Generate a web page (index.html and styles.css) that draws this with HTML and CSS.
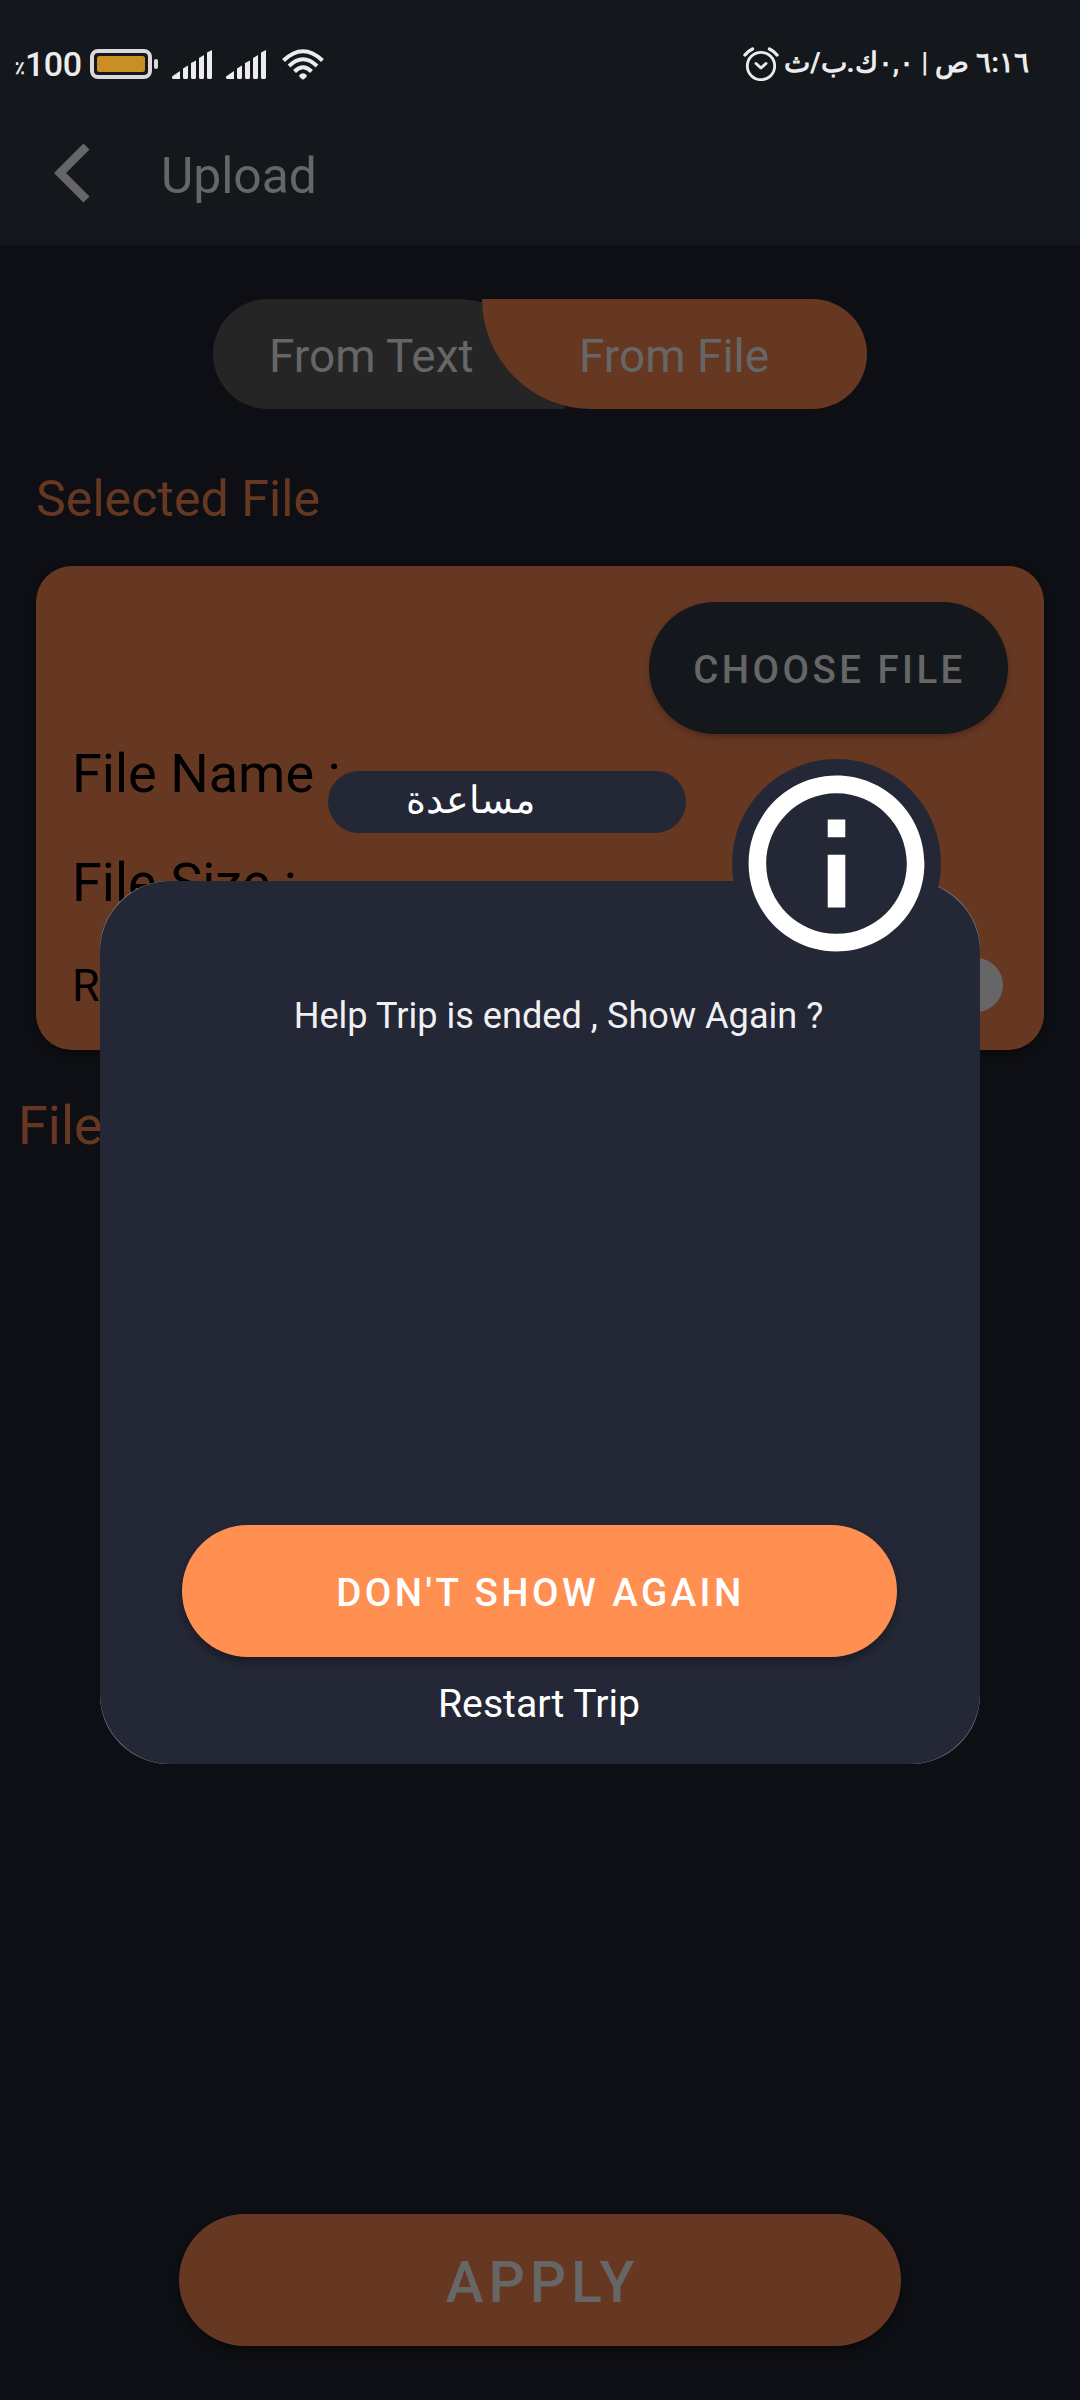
FILE: index.html
```html
<!DOCTYPE html>
<html lang="en">
<head>
<meta charset="utf-8">
<title>Upload</title>
<link rel="stylesheet" href="styles.css">
</head>
<body>
<div class="screen">
  <header class="header">
    <div class="status">
      <span class="percent">٪</span><span class="level">100</span>
      <svg class="battery" width="68" height="30" viewBox="0 0 68 30"><rect x="2" y="2" width="58" height="26" rx="6" fill="none" stroke="#dadada" stroke-width="4"/><rect x="7" y="7" width="48" height="16" rx="2.5" fill="#c98f24"/><rect x="64" y="10" width="4" height="10" rx="2" fill="#dadada"/></svg>
      <svg class="signal" width="40" height="29" viewBox="0 0 40 29"><path d="M0 26.500L8 21V29H1.500Q0 29 0 27.500ZM11 18.500L16 15.500V27.500Q16 29 14.500 29H12.500Q11 29 11 27.500ZM19 13L24 10.500V27.500Q24 29 22.500 29H20.500Q19 29 19 27.500ZM27 8L32 5V27.500Q32 29 30.500 29H28.500Q27 29 27 27.500ZM35 2.500L40 0V27.500Q40 29 38.500 29H36.500Q35 29 35 27.500Z"/></svg>
      <svg class="signal signal-second" width="40" height="29" viewBox="0 0 40 29"><path d="M0 26.500L8 21V29H1.500Q0 29 0 27.500ZM11 18.500L16 15.500V27.500Q16 29 14.500 29H12.500Q11 29 11 27.500ZM19 13L24 10.500V27.500Q24 29 22.500 29H20.500Q19 29 19 27.500ZM27 8L32 5V27.500Q32 29 30.500 29H28.500Q27 29 27 27.500ZM35 2.500L40 0V27.500Q40 29 38.500 29H36.500Q35 29 35 27.500Z"/></svg>
      <svg class="wifi" width="42" height="31" viewBox="0 0 42 31"><g fill="none" stroke="#ececec" stroke-width="4"><path d="M1.500 11.500Q21 -7 40.500 11.500"/><path d="M7 17Q21 3.500 35 17"/><path d="M12.500 22.500Q21 14 29.500 22.500"/></g><path fill="#ececec" d="M17 26.500Q21 22 25 26.500Q25 28 21.800 30.300Q21 30.800 20.200 30.300Q17 28 17 26.500Z"/></svg>
      <svg class="alarm" width="36" height="34" viewBox="0 0 36 34"><g fill="none" stroke="#ececec" stroke-linecap="round" stroke-linejoin="round"><circle cx="18" cy="19" r="13.700" stroke-width="2.800"/><path d="M13 16.500L18 21L23 16.500" stroke-width="3"/><path d="M2 8Q5.500 3.800 9.500 2M34 8Q30.500 3.800 26.500 2" stroke-width="3.400"/></g></svg>
      <span class="clock" dir="rtl">٦:١٦ ص | <span class="rate">٠,٠</span>ك.ب/ث</span>
    </div>
    <div class="toolbar">
      <svg class="back" width="37" height="60" viewBox="0 0 37 60"><path d="M32.500 3.500L6 30L32.500 56.500" fill="none" stroke="#666" stroke-width="8.500"/></svg>
      <h1 class="title">Upload</h1>
    </div>
  </header>
  <main class="content">
    <div class="tabs">
      <div class="tab tab-text">From Text</div>
      <div class="tab tab-file">From File</div>
    </div>
    <h2 class="section">Selected File</h2>
    <section class="card">
      <div class="choose">CHOOSE FILE</div>
      <div class="field">File Name :</div>
      <div class="field field-size">File Size :</div>
      <div class="option"><span class="option-label">R</span><span class="thumb"></span></div>
    </section>
    <h2 class="section section-file">File</h2>
    <div class="apply">APPLY</div>
  </main>
  <div class="help"><span class="help-text" dir="rtl">مساعدة</span></div>
  <div class="dialog">
    <div class="dialog-body">
      <p class="message">Help Trip is ended , Show Again ?</p>
      <div class="dismiss">DON'T SHOW AGAIN</div>
      <div class="restart">Restart Trip</div>
    </div>
  </div>
  <div class="badge"><svg width="211" height="211" viewBox="0 0 24 24" fill="#fff"><path d="M11 7h2v2h-2zm0 4h2v6h-2zm1-9C6.480 2 2 6.480 2 12s4.480 10 10 10 10-4.480 10-10S17.520 2 12 2zm0 18c-4.410 0-8-3.590-8-8s3.590-8 8-8 8 3.590 8 8-3.590 8-8 8z"/></svg></div>
</div>
</body>
</html>
```
FILE: styles.css
```css
* { box-sizing: border-box; }
body { margin: 0; background: #0e0f14; font-family: Roboto, "Noto Sans", sans-serif; }
.screen { position: relative; display: flex; flex-direction: column; width: 1080px; height: 2400px; overflow: hidden; }
h1, h2, p { margin: 0; font-weight: 400; }

.header { height: 245px; background: #14181c; }
.status { display: flex; align-items: center; height: 128px; padding: 0 51px 0 15px; color: #ececec; }
.percent { width: 10px; font-size: 18px; line-height: 30px; padding-top: 8px; font-weight: 700; }
.level { width: 59px; margin-right: 6px; font-size: 34px; line-height: 40px; font-weight: 500; letter-spacing: -0.500px; }
.signal { margin-left: 14px; fill: #ececec; }
.wifi { margin-left: 16px; }
.alarm { margin-left: auto; }
.clock { margin-left: 9px; width: 241px; font-size: 27.800px; font-weight: 700; line-height: 36px; padding-bottom: 2px; white-space: nowrap; }
.rate { letter-spacing: -2.500px; }
.toolbar { display: flex; align-items: center; height: 90px; padding-left: 54px; color: #666; }
.title { margin-left: 70px; padding-top: 5px; font-size: 49.800px; line-height: 58px; }

.content { display: flex; flex-direction: column; flex: 1; }
.tabs { display: flex; width: 654px; height: 110px; margin: 54px auto 0; font-size: 46px; line-height: 115px; color: #666; }
.tab-text { width: 352px; padding-left: 56px; border-radius: 55px 110px 0 55px; background: #252525; }
.tab-file { width: 385px; margin-left: -83px; padding-left: 97px; border-radius: 0 55px 55px 110px; background: #663822; }
.section { margin: 61px 0 0 36px; font-size: 50.200px; line-height: 58px; color: #663822; }
.card { display: flex; flex-direction: column; width: 1008px; height: 484px; margin: 38px auto 0; padding: 36px; border-radius: 36px; background: #663822; color: #000; box-shadow: 0 3px 8px rgba(0,0,0,.4); }
.choose { align-self: flex-end; width: 359px; height: 132px; padding-left: 2px; border-radius: 66px; background: #14181c; color: #666; font-size: 38.500px; font-weight: 500; line-height: 135px; letter-spacing: 3.440px; text-align: center; box-shadow: 0 3px 6px rgba(0,0,0,.25); }
.field { height: 64px; margin-top: 8px; font-size: 54px; line-height: 64px; }
.field-size { margin-top: 45px; }
.option { display: flex; justify-content: space-between; align-items: center; height: 54px; margin-top: 43px; padding-right: 5px; font-size: 45px; }
.thumb { width: 54px; height: 54px; border-radius: 50%; background: #666; }
.section-file { margin: 44px 0 0 18px; font-size: 54px; line-height: 64px; }
.apply { width: 722px; height: 132px; margin: auto auto 54px; padding-left: 5px; border-radius: 66px; background: #663822; color: #666; font-size: 57px; font-weight: 500; line-height: 138px; letter-spacing: 4.900px; text-align: center; box-shadow: 0 5px 9px rgba(0,0,0,.35); }

.help { position: absolute; left: 328px; top: 771px; width: 358px; height: 62px; border-radius: 31px; padding-right: 151px; background: #242735; color: #fff; text-align: right; font-size: 37.500px; line-height: 59px; }
/* the slightly rounder body leaves a thin light edge at the corners only */
.dialog { position: absolute; left: 100px; top: 881px; width: 880px; height: 883px; border-radius: 69px; background: #8a8b92; }
.dialog-body { display: flex; flex-direction: column; align-items: center; height: 883px; border-radius: 70.500px; background: #242735; color: #fff; }
.message { margin: 114px 0 0 37px; font-size: 36.150px; line-height: 42px; color: #f0f0f2; }
.dismiss { width: 715px; height: 132px; margin-top: auto; margin-right: 1px; padding-left: 2px; border-radius: 66px; background: #ff9052; font-size: 38.500px; font-weight: 500; line-height: 135px; letter-spacing: 3.440px; text-align: center; box-shadow: 0 5px 8px rgba(0,0,0,.3); }
.restart { height: 107px; padding-top: 25px; margin-right: 2px; font-size: 39.200px; line-height: 45px; }
.badge { position: absolute; left: 732px; top: 759px; display: flex; align-items: center; justify-content: center; width: 209px; height: 209px; border-radius: 50%; background: #242735; }
.badge svg { flex: none; }
```
